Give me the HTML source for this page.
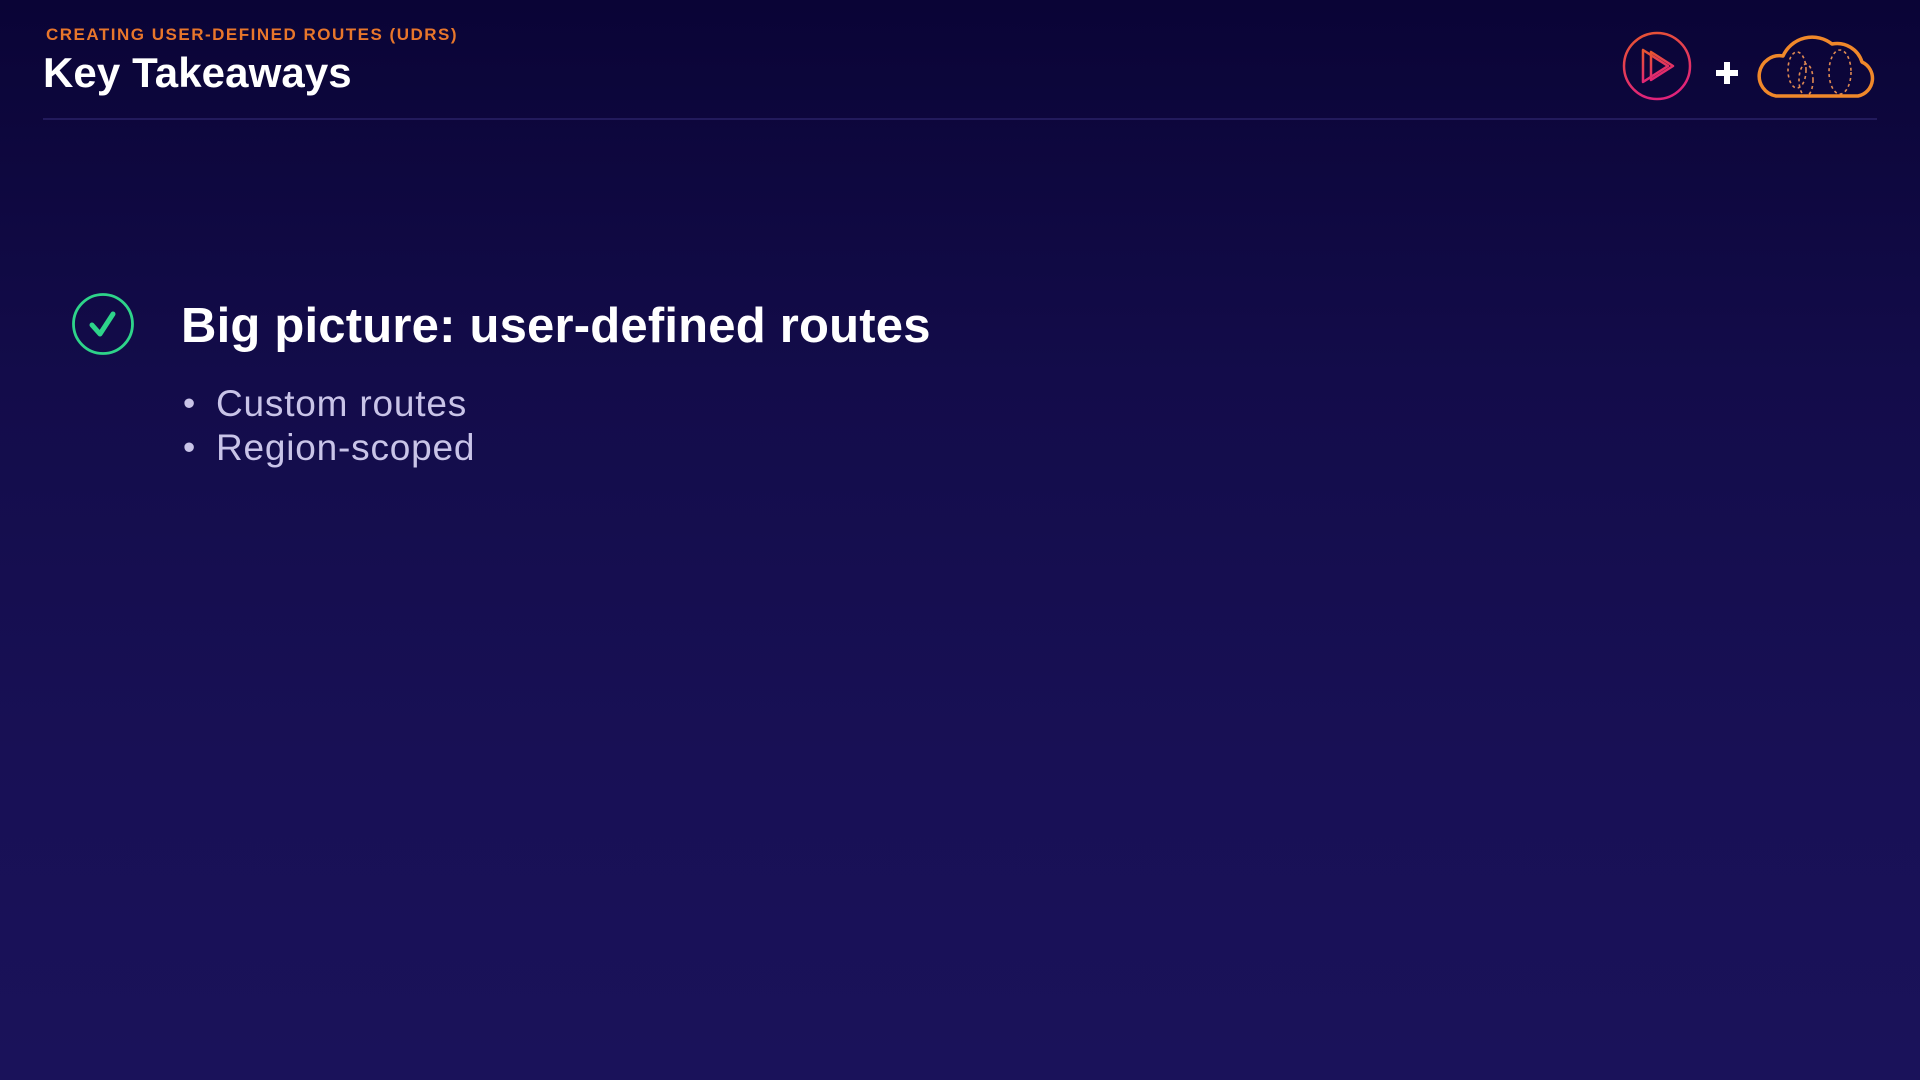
<!DOCTYPE html>
<html><head><meta charset="utf-8"><style>
html,body{margin:0;padding:0}
body{width:1920px;height:1080px;overflow:hidden;position:relative;
background:linear-gradient(180deg,#0a0436 0%,#130c4a 35%,#181055 70%,#1a125a 100%);
font-family:"Liberation Sans",sans-serif}
.t{position:absolute;white-space:nowrap}
</style></head><body>
<div class="t" style="left:46px;top:25px;font-size:17px;font-weight:bold;color:#e8762b;letter-spacing:1.5px">CREATING USER-DEFINED ROUTES (UDRS)</div>
<div class="t" style="left:43px;top:49px;font-size:42px;font-weight:bold;color:#fff;letter-spacing:0.1px">Key Takeaways</div>
<div style="position:absolute;left:43px;top:118px;width:1834px;height:2px;background:#221a5c"></div>
<svg style="position:absolute;left:0;top:0" width="1920" height="140">
<defs><linearGradient id="g" x1="0" y1="0" x2="0.3" y2="1"><stop offset="0" stop-color="#e8572e"/><stop offset="1" stop-color="#e0237a"/></linearGradient></defs>
<circle cx="1657" cy="66" r="33" fill="none" stroke="url(#g)" stroke-width="2.5"/>
<path d="M1643 50 L1643 82 L1668 66 Z" fill="none" stroke="url(#g)" stroke-width="2.5" stroke-linejoin="round"/>
<path d="M1651 52 L1651 80 L1673 66 Z" fill="none" stroke="url(#g)" stroke-width="2.5" stroke-linejoin="round"/>
<path d="M1727 62 V84 M1716 73 H1738" stroke="#fff" stroke-width="6"/>
<path d="M1776 96 H1858 A18 18 0 0 0 1862 62 A26 26 0 0 0 1832 44 A32 32 0 0 0 1783 56 A20 20 0 0 0 1776 96 Z" fill="none" stroke="#f0882a" stroke-width="3.5" stroke-linejoin="round"/>
<g fill="none" stroke="#e08a52" stroke-width="1.6" stroke-dasharray="3 3">
<ellipse cx="1797" cy="70" rx="9" ry="18"/>
<ellipse cx="1806" cy="80" rx="7" ry="16"/>
<ellipse cx="1840" cy="72" rx="11" ry="22"/>
</g>
</svg>
<svg style="position:absolute;left:70px;top:291px" width="66" height="66">
<circle cx="33" cy="33" r="29.5" fill="none" stroke="#2ed48a" stroke-width="2.8"/>
<path d="M22 34 L30 43 L43 23" fill="none" stroke="#2ed48a" stroke-width="5" stroke-linecap="round" stroke-linejoin="round"/>
</svg>
<div class="t" style="left:181px;top:298px;font-size:49px;font-weight:bold;color:#fff;letter-spacing:0.2px">Big picture: user-defined routes</div>
<div class="t" style="left:183px;top:382px;font-size:35px;color:#c9c4e8;line-height:44px">•</div>
<div class="t" style="left:216px;top:382px;font-size:37px;color:#c9c4e8;line-height:44px;letter-spacing:0.8px">Custom routes</div>
<div class="t" style="left:183px;top:426px;font-size:35px;color:#c9c4e8;line-height:44px">•</div>
<div class="t" style="left:216px;top:426px;font-size:37px;color:#c9c4e8;line-height:44px;letter-spacing:0.8px">Region-scoped</div>
</body></html>
